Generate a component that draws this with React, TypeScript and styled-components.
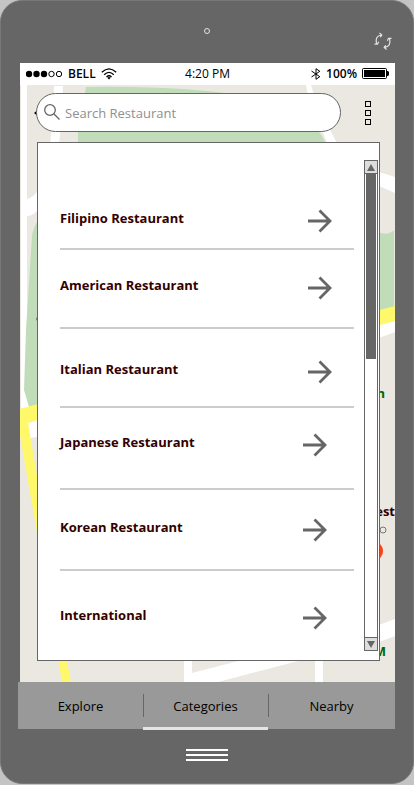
import React, { useState } from "react";
import styled, { createGlobalStyle } from "styled-components";

const GlobalStyle = createGlobalStyle`
  *, *::before, *::after { box-sizing: border-box; }
  body {
    margin: 0;
    background: #c4c4c4;
    font-family: "Open Sans", "Noto Sans", sans-serif;
    color: #000;
  }
  button, input { font: inherit; color: inherit; }
  button { border: 0; padding: 0; margin: 0; background: none; cursor: pointer; }
`;

const Phone = styled.main`
  background: #666;
  border: 1px solid #787878;
  border-radius: 22px;
  padding: 0 18px 0 17px;
`;

const PhoneTop = styled.header`
  height: 62px;
  display: grid;
  grid-template-columns: 1fr auto 1fr;
`;

const Camera = styled.span`
  grid-column: 2;
  margin-top: 27px;
  width: 6px;
  height: 6px;
  border: 1px solid #e4e4e4;
  border-radius: 50%;
`;

const RotateButton = styled.button`
  justify-self: end;
  align-self: start;
  margin: 31px 2px 0 0;
  width: 20px;
  height: 20px;
  svg { display: block; }
`;

const Screen = styled.div`
  margin-left: 2px;
  background: #ebe8e1;
`;

const StatusBar = styled.div`
  height: 22px;
  padding: 0 6px;
  background: #fff;
  display: grid;
  grid-template-columns: 1fr auto 1fr;
  align-items: center;
  font-size: 12px;
  line-height: 22px;
`;

const StatusGroup = styled.div<{ $end?: boolean }>`
  display: flex;
  align-items: center;
  gap: 5px;
  justify-content: ${(p) => (p.$end ? "flex-end" : "flex-start")};
  font-weight: 600;
`;

const MapArea = styled.div`
  position: relative;
  overflow: hidden;
  padding: 8px 15px 21px 16px;
`;

const MapDrawing = styled.svg`
  position: absolute;
  inset: 0;
  width: 100%;
  height: 100%;
`;

const Toolbar = styled.div`
  position: relative;
  display: flex;
  align-items: center;
  gap: 24px;
  padding-right: 9px;
`;

const SearchBox = styled.label`
  flex: 1;
  min-width: 0;
  height: 39px;
  display: flex;
  align-items: center;
  gap: 4px;
  padding: 0 16px 0 7px;
  background: #fff;
  border: 1px solid #666;
  border-radius: 20px;
`;

const SearchInput = styled.input`
  flex: 1;
  min-width: 0;
  border: 0;
  padding: 0;
  outline: none;
  background: transparent;
  font-size: 13px;
  &::placeholder { color: #8f8f8f; opacity: 1; }
`;

const MoreButton = styled.button`
  display: grid;
  gap: 3px;
`;

const Square = styled.span`
  width: 6px;
  height: 6px;
  border: 1px solid #000;
`;

const Panel = styled.section`
  position: relative;
  display: flex;
  gap: 10px;
  margin: 10px 0 0 1px;
  padding: 0 1px 0 22px;
  background: #fff;
  border: 1px solid #666;
`;

const List = styled.ul`
  flex: 1;
  margin: 0;
  padding: 0;
  list-style: none;
`;

const Item = styled.li<{ $height: number }>`
  height: ${(p) => p.$height}px;
  & + & { border-top: 2px solid #ccc; }
`;

const ItemButton = styled.button<{ $lead: number; $inset: number }>`
  width: 100%;
  height: 100%;
  display: flex;
  align-items: flex-start;
  justify-content: space-between;
  padding: ${(p) => p.$lead}px ${(p) => p.$inset}px 0 0;
  font-size: 13px;
  font-weight: 700;
  line-height: 30px;
  color: #300;
  text-align: left;
  svg { display: block; margin-top: 6px; }
`;

const ScrollBar = styled.div`
  width: 14px;
  margin: 17px 0 9px;
  display: flex;
  flex-direction: column;
  border: 1px solid #666;
`;

const ScrollTrack = styled.div`
  flex: 1;
  padding: 0 1px;
`;

const ScrollThumb = styled.div`
  height: 40%;
  background: #666;
`;

const ScrollButton = styled.button<{ $down?: boolean }>`
  height: 13px;
  display: grid;
  place-items: center;
  background: #ddd;
  border: 0 solid #666;
  border-width: ${(p) => (p.$down ? "1px 0 0" : "0 0 1px")};
`;

const Tabs = styled.nav`
  display: grid;
  grid-template-columns: 125fr 125fr 127fr;
  height: 47px;
  background: #999;
`;

const Tab = styled.button<{ $active: boolean }>`
  position: relative;
  font-size: 13px;
  &:not(:first-child)::before {
    content: "";
    position: absolute;
    left: 0;
    top: 12px;
    bottom: 12px;
    width: 1px;
    background: #666;
  }
  &::after {
    content: "";
    position: absolute;
    left: 0;
    right: 0;
    bottom: -1px;
    height: 3px;
    background: ${(p) => (p.$active ? "#e4e4e4" : "transparent")};
  }
`;

const PhoneBottom = styled.footer`
  height: 54px;
  padding-top: 20px;
  display: flex;
  justify-content: center;
  align-items: flex-start;
`;

const HomeButton = styled.button`
  display: grid;
  gap: 3px;
  width: 42px;
`;

const HomeLine = styled.span`
  height: 2px;
  background: #fff;
`;

const categories = [
  { name: "Filipino Restaurant", height: 105, lead: 60, inset: 22 },
  { name: "American Restaurant", height: 79, lead: 20, inset: 22 },
  { name: "Italian Restaurant", height: 79, lead: 25, inset: 22 },
  { name: "Japanese Restaurant", height: 82, lead: 19, inset: 27 },
  { name: "Korean Restaurant", height: 81, lead: 22, inset: 27 },
  { name: "International", height: 91, lead: 29, inset: 27 },
];

const Arrow = () => (
  <svg width="24" height="24" viewBox="0 0 24 24" fill="none" stroke="#666" strokeWidth="2.8" aria-hidden="true">
    <path d="M0 12H22M11.5 1.500L22 12L11.5 22.500" />
  </svg>
);

const CityMap = () => (
  <MapDrawing viewBox="0 0 375 597" preserveAspectRatio="xMidYMid slice" aria-hidden="true">
    <g fill="#fff">
      <path d="M1 0H7V322L1 324Z" />
      <path d="M7 114Q12 113 17 107V126Q12 131 7 131Z" />
      <path d="M34 1H43L42 30L39 60H30L33 30Z" />
      <path d="M4 300L10 322L4 324Z" />
      <path d="M8 338L17 335V352L10 353Z" />
      <path d="M359 87L375 92V108L359 101Z" />
      <path d="M359 240L375 236V247L359 253Z" />
      <path d="M359 540L375 534V551L359 557Z" />
      <path d="M164 570H172V588L230 573H290L198 597H164Z" />
      <path d="M295 570H303V597H295Z" />
    </g>
    <g fill="#c1dcb9">
      <path d="M66 2Q130 1 187 6Q250 12 270 26Q300 40 306 60H58V46Z" />
      <path d="M19 134Q13 142 12 151L6 245L4 305L9 322L19 319Z" />
      <path d="M356 146Q367 152 374 145V224L356 228Z" />
    </g>
    <path d="M286 0H291L297 20L318 60H308L288 12Z" fill="#fff" />
    <g fill="#fff86b">
      <path d="M0 324L18 319V335L8 338L18 397L38 530L51 597H42L17 448L0 350Z" />
      <path d="M356 226L375 221V236L356 241Z" />
    </g>
    <path d="M14 28L19 24V32Z" fill="#000" />
    <circle cx="18" cy="234" r="2" fill="#777" />
    <circle cx="363" cy="445" r="3" fill="none" stroke="#777" />
    <ellipse cx="355" cy="466" rx="8" ry="9" fill="#ff4013" />
    <g fontSize="13" fontWeight="700" textAnchor="end">
      <text x="365" y="313" fill="#060">n</text>
      <text x="375" y="431" fill="#300">est</text>
      <text x="366" y="571" fill="#060">M</text>
    </g>
  </MapDrawing>
);

const SignalDots = () => (
  <svg width="37" height="8" viewBox="0 0 37 8" aria-hidden="true">
    {[3, 10.5, 18, 25.5, 33].map((x, i) => (
      <circle key={x} cx={x} cy="4" r={i < 3 ? 3.2 : 2.7} fill={i < 3 ? "#000" : "none"} stroke={i < 3 ? "none" : "#000"} />
    ))}
  </svg>
);

const Wifi = () => (
  <svg width="16" height="12" viewBox="0 0 16 12" fill="none" stroke="#000" strokeWidth="1.3" aria-hidden="true">
    <path d="M0.8 4.3Q8-2.6 15.2 4.3M3.2 6.7Q8 2 12.8 6.7M5.5 9Q8 6.6 10.5 9" />
    <path d="M6.3 9.7Q8 8.3 9.7 9.7L8 11.5Z" fill="#000" stroke="none" />
  </svg>
);

const Bluetooth = () => (
  <svg width="10" height="12" viewBox="0 0 10 12" fill="none" stroke="#000" aria-hidden="true">
    <path d="M0.5 3L8.8 8.7L5 11.3V0.7L8.8 3.3L0.5 9" />
  </svg>
);

const Battery = () => (
  <svg width="27" height="12" viewBox="0 0 27 12" aria-hidden="true">
    <rect x="0.5" y="0.5" width="24" height="10" rx="1" fill="#fff" stroke="#000" />
    <path d="M2 2H23V9H2ZM25 3H26L27 4V7L26 8H25Z" />
  </svg>
);

const Magnifier = () => (
  <svg width="17" height="17" viewBox="0 0 17 17" fill="none" stroke="#666" strokeWidth="1.3" aria-hidden="true">
    <circle cx="6" cy="6" r="5.3" />
    <path d="M9.8 9.8L15.500 15.500" />
  </svg>
);

const Rotate = () => (
  <svg width="20" height="20" viewBox="0 0 20 20" fill="none" stroke="#e4e4e4" strokeWidth="1.2" aria-hidden="true">
    <path d="M8.500 3Q1.500 4 3.500 12M6.500 1L8.800 3L7.300 5.200M1.500 12.200H4.500L5.700 9.800" />
    <path d="M11.500 15.500Q18.500 14.500 16.500 6.500M13.500 17.500L11.200 15.500L12.700 13.300M18.500 6.300H15.500L14.300 8.700" />
  </svg>
);

export default function App() {
  const [query, setQuery] = useState("");
  const [tab, setTab] = useState("Categories");

  return (
    <>
      <GlobalStyle />
      <Phone>
        <PhoneTop>
          <Camera />
          <RotateButton aria-label="Rotate"><Rotate /></RotateButton>
        </PhoneTop>
        <Screen>
          <StatusBar>
            <StatusGroup><SignalDots /><span>BELL</span><Wifi /></StatusGroup>
            <span>4:20 PM</span>
            <StatusGroup $end><Bluetooth /><span>100%</span><Battery /></StatusGroup>
          </StatusBar>
          <MapArea>
            <CityMap />
            <Toolbar>
              <SearchBox>
                <Magnifier />
                <SearchInput
                  aria-label="Search Restaurant"
                  placeholder="Search Restaurant"
                  value={query}
                  onChange={(e) => setQuery(e.target.value)}
                />
              </SearchBox>
              <MoreButton aria-label="More options"><Square /><Square /><Square /></MoreButton>
            </Toolbar>
            <Panel>
              <List>
                {categories.map((c) => (
                  <Item key={c.name} $height={c.height}>
                    <ItemButton $lead={c.lead} $inset={c.inset}>
                      <span>{c.name}</span>
                      <Arrow />
                    </ItemButton>
                  </Item>
                ))}
              </List>
              <ScrollBar>
                <ScrollButton aria-label="Scroll up">
                  <svg width="8" height="7" viewBox="0 0 8 7"><path d="M4 0L8 7H0Z" fill="#666" /></svg>
                </ScrollButton>
                <ScrollTrack><ScrollThumb /></ScrollTrack>
                <ScrollButton $down aria-label="Scroll down">
                  <svg width="8" height="7" viewBox="0 0 8 7"><path d="M0 0H8L4 7Z" fill="#666" /></svg>
                </ScrollButton>
              </ScrollBar>
            </Panel>
          </MapArea>
        </Screen>
        <Tabs>
          {["Explore", "Categories", "Nearby"].map((name) => (
            <Tab key={name} $active={tab === name} onClick={() => setTab(name)}>{name}</Tab>
          ))}
        </Tabs>
        <PhoneBottom>
          <HomeButton aria-label="Home"><HomeLine /><HomeLine /><HomeLine /></HomeButton>
        </PhoneBottom>
      </Phone>
    </>
  );
}
